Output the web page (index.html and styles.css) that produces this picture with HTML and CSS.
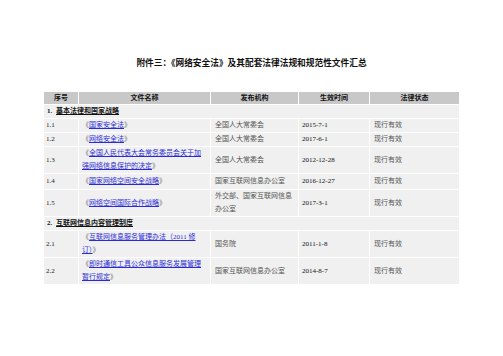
FILE: index.html
```html
<!DOCTYPE html>
<html lang="zh-CN">
<head>
<meta charset="utf-8">
<title>附件三</title>
<link rel="stylesheet" href="styles.css">
</head>
<body>
<div class="page">
  <h1 class="title">附件三：《网络安全法》及其配套法律法规和规范性文件汇总</h1>
  <table class="laws">
    <colgroup>
      <col class="c1"><col class="c2"><col class="c3"><col class="c4"><col class="c5">
    </colgroup>
    <thead>
      <tr><th>序号</th><th>文件名称</th><th>发布机构</th><th>生效时间</th><th>法律状态</th></tr>
    </thead>
    <tbody>
      <tr class="sec"><td colspan="5"><span class="num">1.</span> <u>基本法律和国家战略</u></td></tr>
      <tr><td class="no">1.1</td><td class="name"><span class="bk">《</span><a>国家安全法</a><span class="bk">》</span></td><td class="org">全国人大常委会</td><td class="date">2015-7-1</td><td class="st">现行有效</td></tr>
      <tr><td class="no">1.2</td><td class="name"><span class="bk">《</span><a>网络安全法</a><span class="bk">》</span></td><td class="org">全国人大常委会</td><td class="date">2017-6-1</td><td class="st">现行有效</td></tr>
      <tr><td class="no">1.3</td><td class="name"><span class="bk">《</span><a>全国人民代表大会常务委员会关于加<br>强网络信息保护的决定</a><span class="bk">》</span></td><td class="org">全国人大常委会</td><td class="date">2012-12-28</td><td class="st">现行有效</td></tr>
      <tr class="r14"><td class="no">1.4</td><td class="name"><span class="bk">《</span><a>国家网络空间安全战略</a><span class="bk">》</span></td><td class="org">国家互联网信息办公室</td><td class="date">2016-12-27</td><td class="st">现行有效</td></tr>
      <tr><td class="no">1.5</td><td class="name"><span class="bk">《</span><a>网络空间国际合作战略</a><span class="bk">》</span></td><td class="org">外交部、国家互联网信息<br>办公室</td><td class="date">2017-3-1</td><td class="st">现行有效</td></tr>
      <tr class="sec"><td colspan="5"><span class="num">2.</span> <u>互联网信息内容管理制度</u></td></tr>
      <tr><td class="no">2.1</td><td class="name"><span class="bk">《</span><a>互联网信息服务管理办法（2011 修<br>订）</a><span class="bk">》</span></td><td class="org">国务院</td><td class="date">2011-1-8</td><td class="st">现行有效</td></tr>
      <tr><td class="no">2.2</td><td class="name"><span class="bk">《</span><a>即时通信工具公众信息服务发展管理<br>暂行规定</a><span class="bk">》</span></td><td class="org">国家互联网信息办公室</td><td class="date">2014-8-7</td><td class="st">现行有效</td></tr>
    </tbody>
  </table>
</div>
</body>
</html>
```
FILE: styles.css
```css
html, body {
  margin: 0;
  padding: 0;
  background: #ffffff;
}
.page {
  width: 503px;
  padding-top: 57px;
  font-family: "Liberation Serif", "Noto Sans CJK SC", serif;
  color: #222;
}
.title {
  margin: 0;
  text-align: center;
  font-size: 8.7px;
  line-height: 13px;
  font-weight: bold;
  color: #111;
}
.laws {
  margin: 21px auto 0;
  width: 417px;
  table-layout: fixed;
  border-collapse: separate;
  border-spacing: 1px;
  font-size: 7px;
  line-height: 13px;
}
.c1 { width: 34px; }
.c2 { width: 131px; }
.c3 { width: 87px; }
.c4 { width: 70px; }
.c5 { width: 89px; }
.laws th {
  background: #c8c8c8;
  font-weight: bold;
  color: #111;
  padding: 0;
  height: 12px;
  line-height: 12px;
  text-align: center;
}
.laws td {
  background: #f0f0f0;
  padding: 0 3px;
  vertical-align: middle;
  text-align: left;
}
.laws td.name { padding-left: 3px; }
.laws td.org, .laws td.st { padding-left: 4px; color: #555; }
.laws td.date { color: #111; padding-left: 3px; }
.laws td.no { padding-left: 2px; color: #222; }
.laws tr.r14 td { height: 15px; }
.sec td {
  font-weight: bold;
  color: #111;
  padding-left: 3px;
}
.sec .num { margin-right: 2px; }
.sec u { text-decoration: underline; }
.bk { color: #666; }
.name a {
  color: #2b2bd6;
  text-decoration: underline;
}
```
